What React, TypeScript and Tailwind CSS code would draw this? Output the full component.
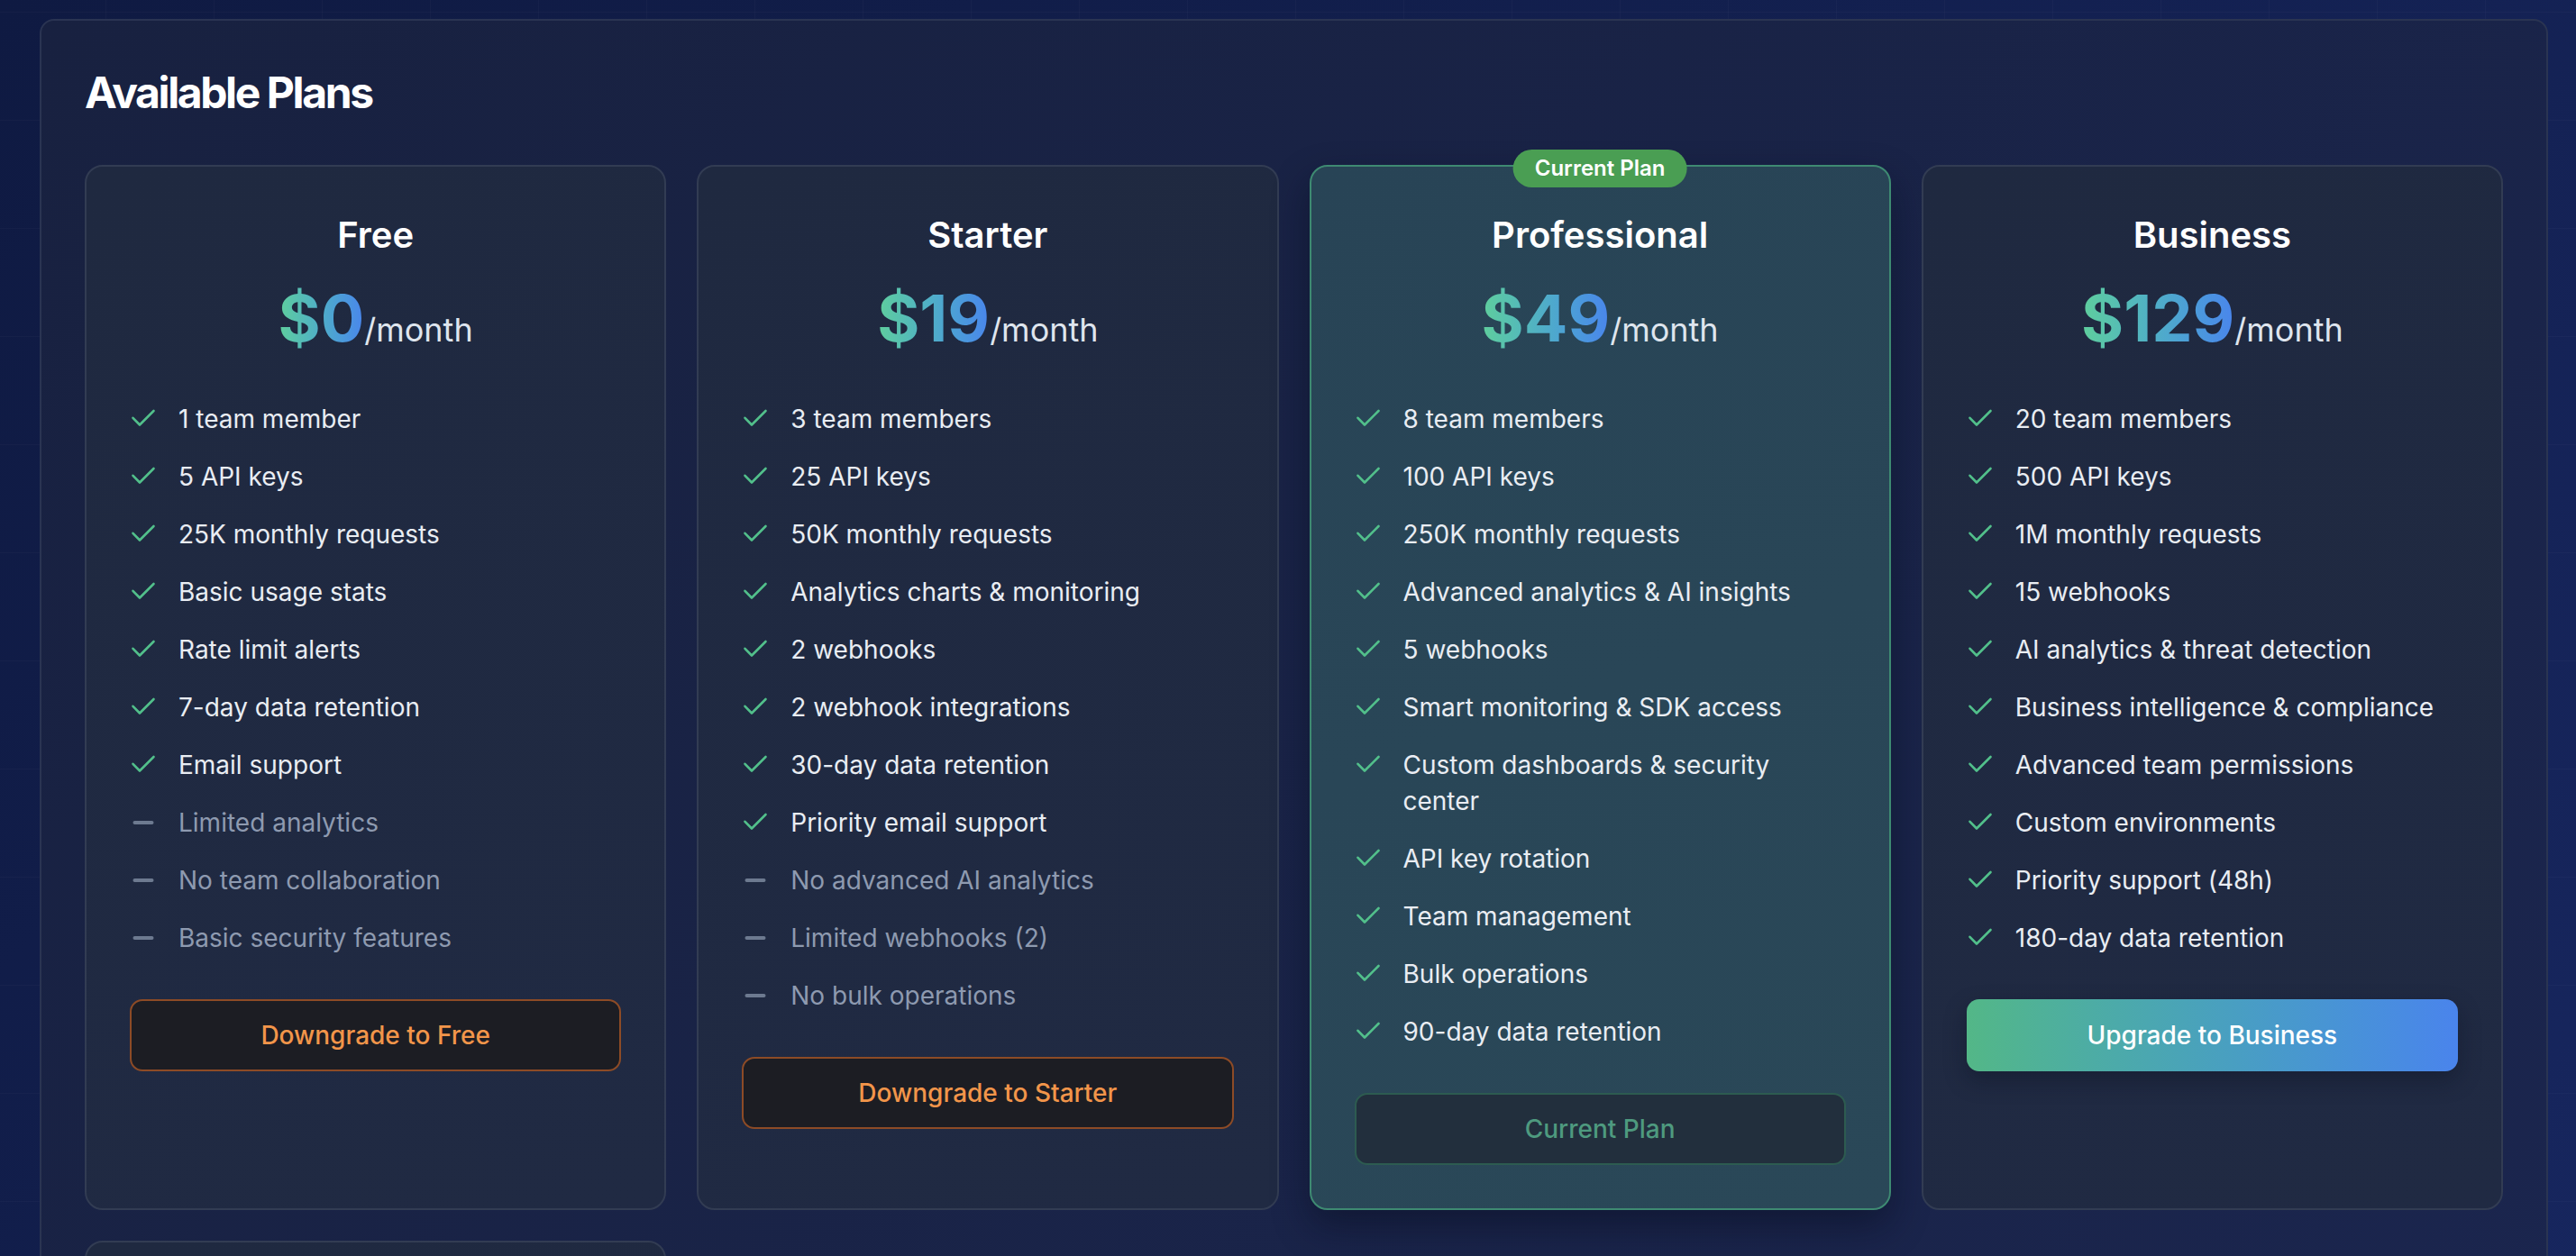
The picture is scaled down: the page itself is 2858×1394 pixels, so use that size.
import React from "react";

type Feature = { text: string; included: boolean };

type Plan = {
  name: string;
  price: string;
  features: Feature[];
  action: "downgrade" | "current" | "upgrade";
  actionLabel: string;
};

const yes = (text: string): Feature => ({ text, included: true });
const no = (text: string): Feature => ({ text, included: false });

const plans: Plan[] = [
  {
    name: "Free",
    price: "$0",
    action: "downgrade",
    actionLabel: "Downgrade to Free",
    features: [
      yes("1 team member"),
      yes("5 API keys"),
      yes("25K monthly requests"),
      yes("Basic usage stats"),
      yes("Rate limit alerts"),
      yes("7-day data retention"),
      yes("Email support"),
      no("Limited analytics"),
      no("No team collaboration"),
      no("Basic security features"),
    ],
  },
  {
    name: "Starter",
    price: "$19",
    action: "downgrade",
    actionLabel: "Downgrade to Starter",
    features: [
      yes("3 team members"),
      yes("25 API keys"),
      yes("50K monthly requests"),
      yes("Analytics charts & monitoring"),
      yes("2 webhooks"),
      yes("2 webhook integrations"),
      yes("30-day data retention"),
      yes("Priority email support"),
      no("No advanced AI analytics"),
      no("Limited webhooks (2)"),
      no("No bulk operations"),
    ],
  },
  {
    name: "Professional",
    price: "$49",
    action: "current",
    actionLabel: "Current Plan",
    features: [
      yes("8 team members"),
      yes("100 API keys"),
      yes("250K monthly requests"),
      yes("Advanced analytics & AI insights"),
      yes("5 webhooks"),
      yes("Smart monitoring & SDK access"),
      yes("Custom dashboards & security center"),
      yes("API key rotation"),
      yes("Team management"),
      yes("Bulk operations"),
      yes("90-day data retention"),
    ],
  },
  {
    name: "Business",
    price: "$129",
    action: "upgrade",
    actionLabel: "Upgrade to Business",
    features: [
      yes("20 team members"),
      yes("500 API keys"),
      yes("1M monthly requests"),
      yes("15 webhooks"),
      yes("AI analytics & threat detection"),
      yes("Business intelligence & compliance"),
      yes("Advanced team permissions"),
      yes("Custom environments"),
      yes("Priority support (48h)"),
      yes("180-day data retention"),
    ],
  },
  {
    name: "Enterprise",
    price: "$399",
    action: "upgrade",
    actionLabel: "Contact Sales",
    features: [
      yes("Unlimited team members"),
      yes("Unlimited API keys"),
      yes("10M monthly requests"),
      yes("Unlimited webhooks"),
      yes("Dedicated support"),
    ],
  },
];

function CheckIcon() {
  return (
    <svg width="32" height="28" viewBox="0 0 32 28" fill="none" className="mt-[6px] flex-none">
      <path
        d="M3.5 12.8L11 20.5L26.5 5"
        stroke="#52c08b"
        strokeWidth="2.6"
        strokeLinecap="round"
        strokeLinejoin="round"
      />
    </svg>
  );
}

function DashIcon() {
  return (
    <svg width="32" height="28" viewBox="0 0 32 28" fill="none" className="mt-[6px] flex-none">
      <path d="M5.5 14H24.5" stroke="#6d7a90" strokeWidth="4" strokeLinecap="round" />
    </svg>
  );
}

function PlanButton({ plan }: { plan: Plan }) {
  const base =
    "flex h-[80px] w-full items-center justify-center rounded-[14px] text-[28px] font-medium leading-[40px]";
  if (plan.action === "current") {
    return (
      <button className={`${base} border-2 border-[#2d5b50] bg-[#222f3d] text-[#4e9a7f]`}>
        {plan.actionLabel}
      </button>
    );
  }
  if (plan.action === "upgrade") {
    return (
      <button
        className={`${base} bg-gradient-to-r from-[#53b787] to-[#4a84ec] text-white shadow-[0_10px_24px_rgba(10,14,30,0.35)]`}
      >
        {plan.actionLabel}
      </button>
    );
  }
  return (
    <button className={`${base} border-2 border-[#8d4b26] bg-[#1c1d23] text-[#f2954a]`}>
      {plan.actionLabel}
    </button>
  );
}

function PlanCard({ plan }: { plan: Plan }) {
  const current = plan.action === "current";
  return (
    <div
      className={`relative rounded-[20px] border-2 p-[48px] ${
        current
          ? "border-[#3e8a72] bg-[linear-gradient(160deg,#284456,#2a4858)] shadow-[0_18px_40px_rgba(6,10,28,0.45)]"
          : "border-[#323c53] bg-[linear-gradient(160deg,#1f2940,#202a43)]"
      }`}
    >
      {current && (
        <div className="absolute -top-[19px] left-1/2 flex h-[42px] -translate-x-1/2 items-center rounded-full bg-[#4a9e53] px-[24px] text-[24px] font-semibold whitespace-nowrap text-white">
          Current Plan
        </div>
      )}
      <h3 className="text-center text-[40px] leading-[56px] font-semibold text-white">{plan.name}</h3>
      <div className="mt-[24px] mb-[52px] flex h-[80px] items-baseline justify-center">
        <span className="bg-gradient-to-r from-[#5fce9c] to-[#4a85ec] bg-clip-text text-[72px] leading-[80px] font-bold text-transparent">
          {plan.price}
        </span>
        <span className="text-[36px] leading-[40px] text-[#dfe5ee]">/month</span>
      </div>
      <ul className="mb-[48px] flex flex-col gap-[24px]">
        {plan.features.map((f) => (
          <li key={f.text} className="flex items-start gap-[22px]">
            {f.included ? <CheckIcon /> : <DashIcon />}
            <span
              className={`text-[28px] leading-[40px] ${f.included ? "text-[#e9edf3]" : "text-[#8e9ab0]"}`}
            >
              {f.text}
            </span>
          </li>
        ))}
      </ul>
      <PlanButton plan={plan} />
    </div>
  );
}

export default function App() {
  return (
    <div className="min-h-screen bg-[#121e4b] bg-[linear-gradient(rgba(255,255,255,0.025)_1px,transparent_1px),linear-gradient(90deg,rgba(255,255,255,0.025)_1px,transparent_1px),linear-gradient(135deg,#0f1a42,#182863)] pt-[21px] pb-[60px] font-['Inter',sans-serif] [background-position:117px_13px,117px_13px,0_0] [background-size:120px_120px,120px_120px,100%_100%]">
      <section className="mr-[31px] ml-[44px] rounded-[16px] border-2 border-[#2a3452] bg-[linear-gradient(135deg,#182140,#1b2650)] p-[48px]">
        <h2 className="mb-[48px] text-[48px] leading-[64px] font-bold tracking-[-0.05em] text-white">
          Available Plans
        </h2>
        <div className="grid grid-cols-4 gap-[34px]">
          {plans.map((p) => (
            <PlanCard key={p.name} plan={p} />
          ))}
        </div>
      </section>
    </div>
  );
}
